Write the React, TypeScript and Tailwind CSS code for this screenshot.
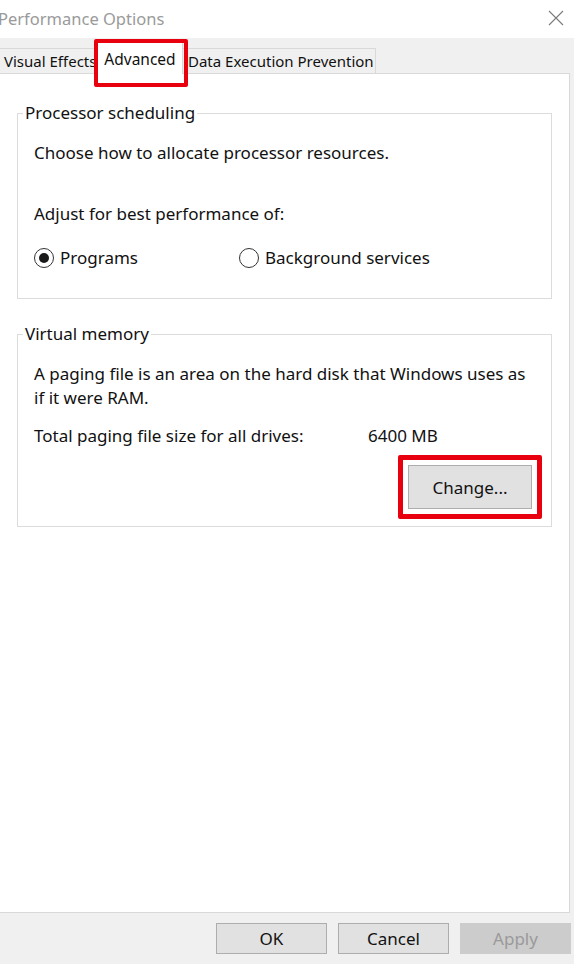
import React from "react";

const FONT = "font-['Noto_Sans','Open_Sans',sans-serif]";

function Radio({ checked, label }: { checked?: boolean; label: string }) {
  return (
    <div className="flex items-center gap-[6px]">
      <span className="flex h-[20px] w-[20px] items-center justify-center rounded-full border border-[#333] bg-white">
        {checked && <span className="h-[10px] w-[10px] rounded-full bg-[#1a1a1a]" />}
      </span>
      <span>{label}</span>
    </div>
  );
}

function WinButton({
  children,
  disabled,
  className = "",
}: {
  children: React.ReactNode;
  disabled?: boolean;
  className?: string;
}) {
  return (
    <button
      className={
        "flex items-center justify-center border text-[17px] leading-none " +
        (disabled
          ? "border-[#cccccc] bg-[#cccccc] text-[#9a9a9a] "
          : "border-[#adadad] bg-[#e1e1e1] text-[#111] ") +
        className
      }
    >
      {children}
    </button>
  );
}

export default function App() {
  return (
    <div className={`flex h-[964px] w-[574px] flex-col overflow-hidden bg-white text-[17px] leading-[24px] text-[#111] ${FONT}`}>
      {/* title bar */}
      <div className="flex h-[38px] shrink-0 items-center justify-between bg-white">
        <span className="ml-[-2px] text-[16.5px] text-[#9a9a9a]">Performance Options</span>
        <svg width="16" height="16" viewBox="0 0 16 16" className="mr-[10px] mt-[-2px]">
          <path d="M1 1 L15 15 M15 1 L1 15" stroke="#7a7a7a" strokeWidth="1.1" />
        </svg>
      </div>

      <div className="flex flex-1 flex-col bg-[#f0f0f0]">
        {/* tabs */}
        <div className="relative flex h-[35px] shrink-0 items-end whitespace-nowrap text-[15px] leading-[22px]">
          <div className="ml-[-1px] flex h-[25px] w-[98px] items-center overflow-hidden border border-b-0 border-[#d9d9d9] bg-[#f0f0f0] pl-[4px]">
            Visual Effects
          </div>
          <div className="z-10 mb-[-1px] flex h-[32px] w-[86px] items-start justify-center border border-b-0 border-[#d9d9d9] bg-white pt-[5px] text-[15.5px]">
            Advanced
          </div>
          <div className="flex h-[25px] w-[193px] items-center border border-b-0 border-l-0 border-[#d9d9d9] bg-[#f0f0f0] pl-[5px]">
            Data Execution Prevention
          </div>
          <div className="pointer-events-none absolute left-[94px] top-[1px] z-20 h-[48px] w-[94px] rounded-[2px] border-[4px] border-[#e8000e]" />
        </div>

        {/* panel */}
        <div className="mr-[4px] flex flex-1 flex-col border border-l-0 border-[#d9d9d9] bg-white px-[17px] pt-[27px]">
          <fieldset className="border border-[#dcdcdc] pb-[28px] pl-[16px] pr-[16px]">
            <legend className="ml-[-11px] px-[2px]">Processor scheduling</legend>
            <div className="pt-[16px]">Choose how to allocate processor resources.</div>
            <div className="mt-[37px]">Adjust for best performance of:</div>
            <div className="mt-[20px] flex">
              <div className="w-[205px]">
                <Radio checked label="Programs" />
              </div>
              <Radio label="Background services" />
            </div>
          </fieldset>

          <fieldset className="mt-[23px] border border-[#dcdcdc] pb-[7px] pl-[16px] pr-[9px]">
            <legend className="ml-[-11px] px-[2px]">Virtual memory</legend>
            <div className="pt-[16px]">
              A paging file is an area on the hard disk that Windows uses as
              <br />
              if it were RAM.
            </div>
            <div className="mt-[14px] flex">
              <span className="w-[334px]">Total paging file size for all drives:</span>
              <span>6400 MB</span>
            </div>
            <div className="mt-[7px] flex justify-end">
              <div className="rounded-[2px] border-[5px] border-[#e8000e] p-[5px]">
                <WinButton className="h-[44px] w-[124px]">Change...</WinButton>
              </div>
            </div>
          </fieldset>
        </div>

        {/* bottom buttons */}
        <div className="flex h-[51px] shrink-0 items-start justify-end gap-[11px] pr-[3px] pt-[10px]">
          <WinButton className="h-[31px] w-[111px]">OK</WinButton>
          <WinButton className="h-[31px] w-[111px]">Cancel</WinButton>
          <WinButton disabled className="h-[31px] w-[111px]">Apply</WinButton>
        </div>
      </div>
    </div>
  );
}
